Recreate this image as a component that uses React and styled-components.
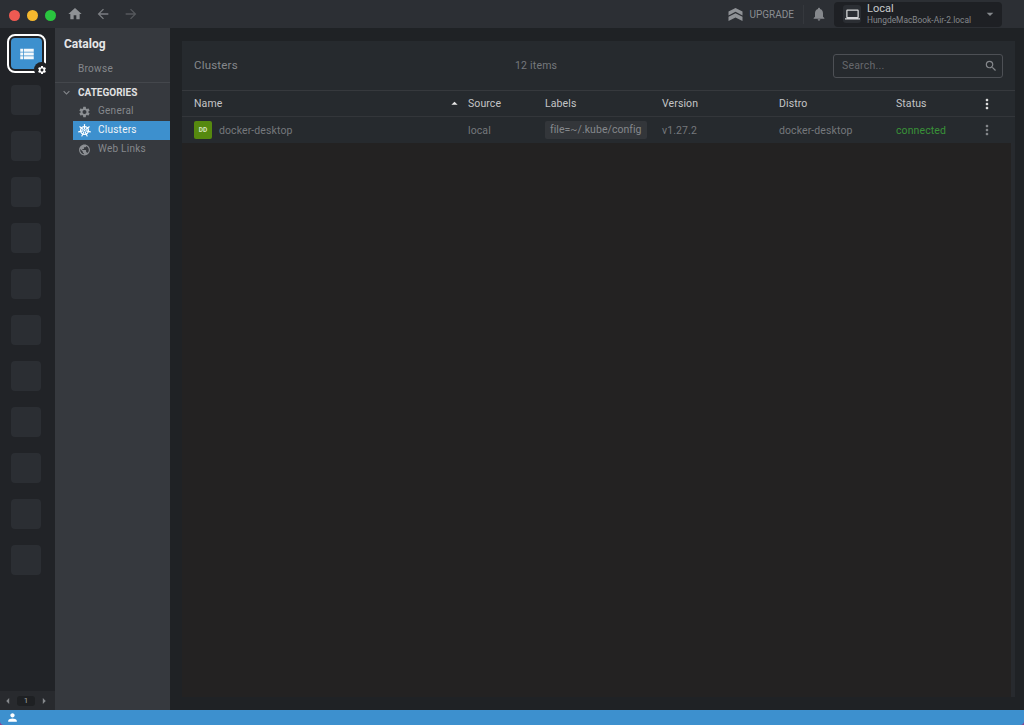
import React from "react";
import styled, { createGlobalStyle } from "styled-components";
import {
  MdHome, MdArrowBack, MdArrowForward, MdNotifications, MdLaptop, MdSearch, MdMoreVert,
  MdViewList, MdSettings, MdPublic, MdPerson, MdExpandMore, MdArrowDropDown, MdArrowDropUp,
  MdArrowLeft, MdArrowRight,
} from "react-icons/md";

const Global = createGlobalStyle`
  html, body { margin: 0; padding: 0; background: #2a2c31; }
  body { font-family: Roboto, "Liberation Sans", sans-serif; }
  * { box-sizing: border-box; }
`;

const Page = styled.div`
  width: 1024px; height: 725px; display: flex; flex-direction: column; overflow: hidden;
  background: #8d3f8e; color: #8e9297; font-size: 11px;
`;
const TopBar = styled.header`
  height: 28px; flex: none; display: flex; align-items: center; background: #2c2f34; padding-left: 9px;
`;
const Lights = styled.div`display: flex; gap: 7px; margin: 2px 11px 0 0;`;
const Light = styled.span`
  width: 11px; height: 11px; border-radius: 50%; background: ${p => p.$c};
`;
const NavIcon = styled.span`
  display: flex; color: ${p => p.$c}; font-size: ${p => p.$s || 16}px; margin-right: ${p => p.$mr || 0}px;
`;
const Spacer = styled.div`flex: 1;`;
const Upgrade = styled.div`
  display: flex; align-items: center; gap: 6px; color: #8a8d91; font-size: 10px; letter-spacing: 0;
`;
const Divider = styled.span`width: 1px; height: 19px; background: #35383d; margin: 0 7px 0 9px;`;
const Cluster = styled.div`
  width: 168px; height: 25px; margin: 0 22px 0 7px; background: #1e2024; border-radius: 4px;
  display: flex; align-items: center; padding: 0 4px 0 9px;
`;
const LaptopBox = styled.span`
  width: 18px; height: 18px; border-radius: 3px; background: #2b2e33; color: #d5d6d8;
  display: flex; align-items: center; justify-content: center; font-size: 15px; margin-right: 6px; flex: none;
`;
const ClusterText = styled.div`flex: 1; display: flex; flex-direction: column; min-width: 0;`;
const ClusterName = styled.span`font-size: 11px; line-height: 12px; color: #c8c9cb;`;
const ClusterHost = styled.span`font-size: 8.4px; line-height: 11px; color: #85888c; white-space: nowrap;`;
const Body = styled.div`flex: 1; display: flex; min-height: 0;`;
const Hotbar = styled.nav`
  width: 55px; flex: none; background: #212327; display: flex; flex-direction: column;
`;
const Tiles = styled.div`
  flex: 1; display: flex; flex-direction: column; align-items: flex-start; gap: 16px; padding: 6px 0 0 7px;
`;
const ActiveSlot = styled.div`
  width: 39px; height: 39px; margin-bottom: -4px; border: 2px solid #fff; border-radius: 8px;
  display: flex; align-items: center; justify-content: center; position: relative;
`;
const ActiveTile = styled.div`
  width: 31px; height: 31px; border-radius: 4px; background: #3d90ce; color: #f4f8fb;
  display: flex; align-items: center; justify-content: center; font-size: 18px;
`;
const GearBadge = styled.span`
  position: absolute; right: -5px; bottom: -6px; width: 15px; height: 15px; border-radius: 50%;
  background: #212327; color: #fff; display: flex; align-items: center; justify-content: center; font-size: 10px;
`;
const Tile = styled.div`width: 30px; height: 30px; margin-left: 4px; border-radius: 4px; background: #2b2e33;`;
const Pager = styled.div`
  height: 19px; flex: none; background: #282a2e; display: flex; align-items: center; justify-content: center;
  color: #85888c; font-size: 14px; padding-right: 3px;
`;
const PageNum = styled.span`
  width: 18px; height: 10px; margin: 0 2px; background: #1e2023; border-radius: 3px; font-size: 8px;
  color: #a0a2a5; display: flex; align-items: center; justify-content: center;
`;
const Sidebar = styled.aside`
  width: 115px; flex: none; background: #36393e; display: flex; flex-direction: column;
`;
const SideTitle = styled.div`
  font-size: 12px; font-weight: 700; color: #e6e7e8; padding: 9px 0 0 9px; line-height: 14px;
`;
const BrowseRow = styled.div`
  padding: 12px 0 7px 23px; font-size: 10px; line-height: 12px; color: #85888c;
  border-bottom: 1px solid #44474c; letter-spacing: .3px;
`;
const CategoryHead = styled.div`
  display: flex; align-items: center; height: 19px; padding-left: 5px; gap: 5px; color: #e0e1e2;
  font-size: 10px; font-weight: 700;
`;
const Chevron = styled.span`display: flex; color: #85888c; font-size: 13px;`;
const CatList = styled.div`display: flex; flex-direction: column; margin-left: 18px;`;
const CatRow = styled.div`
  height: 19px; display: flex; align-items: center; gap: 7px; padding: 0 0 2px 5px;
  font-size: 10px; letter-spacing: .25px;
  background: ${p => (p.$active ? "#3d90ce" : "transparent")};
  color: ${p => (p.$active ? "#f2f4f6" : "#85888c")};
`;
const CatIcon = styled.span`
  display: flex; width: 13px; justify-content: center; font-size: 14px; margin-top: 2px;
  color: ${p => (p.$active ? "#fff" : "#8c8f93")};
`;
const Main = styled.main`
  flex: 1; min-width: 0; background: #1f2225; display: flex; padding: 13px 9px 13px 12px;
`;
const Content = styled.section`
  flex: 1; display: flex; flex-direction: column; min-width: 0; background: #272a2e;
`;
const PanelHead = styled.div`
  height: 50px; flex: none; display: flex; align-items: center; padding: 0 12px 0 12px; background: #262a2e;
  border-bottom: 1px solid #36393d;
`;
const PanelTitle = styled.div`font-size: 11.5px; color: #85888c; letter-spacing: .2px; width: 321px; margin-bottom: 2px;`;
const Count = styled.div`font-size: 10.5px; color: #75787c; letter-spacing: .2px;`;
const SearchBox = styled.div`
  width: 170px; height: 24px; border: 1px solid #4d5055; border-radius: 3px; display: flex; align-items: center;
  justify-content: space-between; padding: 0 4px 0 8px; color: #66696d; font-size: 10.5px; letter-spacing: .2px;
`;
const SearchIcon = styled.span`display: flex; color: #85888c; font-size: 14px;`;
const Grid = styled.div`
  height: ${p => p.$h}px; flex: none; display: grid; align-items: center;
  grid-template-columns: 274px 77px 117px 117px 117px 84px 1fr; padding: ${p => p.$pt || 0}px 0 0 12px;
  background: #262a2e; border-bottom: 1px solid ${p => p.$line};
  font-size: 10.5px; color: ${p => p.$c}; letter-spacing: .1px;
`;
const NameHead = styled.div`display: flex; align-items: center; justify-content: space-between; padding-right: 6px;`;
const Sort = styled.span`display: flex; font-size: 15px; color: #e8e8e8;`;
const NameCell = styled.div`display: flex; align-items: center; gap: 7px;`;
const Avatar = styled.span`
  width: 18px; height: 18px; border-radius: 2px; background: #56890f; color: #d8e6c2;
  display: flex; align-items: center; justify-content: center; font-size: 6.5px; font-weight: 700; letter-spacing: 0;
`;
const LabelChip = styled.span`
  display: inline-block; height: 18px; line-height: 18px; padding: 0 5px; background: #33363a; border-radius: 2px;
  font-size: 10.5px; letter-spacing: .05px; color: #85888c; white-space: nowrap;
`;
const Connected = styled.span`color: #399238;`;
const More = styled.span`display: flex; margin-left: -1px; font-size: 16px; color: ${p => p.$c};`;
const TableBody = styled.div`flex: 1; margin-right: 4px; background: #232222;`;
const Status = styled.footer`
  height: 15px; flex: none; background: #3d90ce; color: #fff; display: flex; align-items: center;
  padding-left: 6px; font-size: 13px; border-radius: 0 0 4px 4px;
`;

const UpgradeIcon = () => (
  <svg width="15" height="13" viewBox="0 0 15 13" fill="#8f9296">
    <path d="M7.5 0 14.5 3.6V7.4L7.5 3.8 .5 7.4V3.6Z" />
    <path d="M7.5 5.2 14.5 8.8V13L7.5 9.4 .5 13V8.8Z" />
  </svg>
);

const HelmIcon = () => {
  const spokes = Array.from({ length: 7 }, (_, i) => {
    const a = (i * 2 * Math.PI) / 7 - Math.PI / 2;
    return {
      x1: 8 + 2 * Math.cos(a), y1: 8 + 2 * Math.sin(a),
      x2: 8 + 7.4 * Math.cos(a), y2: 8 + 7.4 * Math.sin(a),
    };
  });
  return (
    <svg width="15" height="15" viewBox="0 0 16 16" fill="none" stroke="#fff">
      <circle cx="8" cy="8" r="4.8" strokeWidth="1.7" />
      <circle cx="8" cy="8" r="1" fill="#fff" stroke="none" />
      {spokes.map((s, i) => <line key={i} {...s} strokeWidth="1.4" strokeLinecap="round" />)}
    </svg>
  );
};

export default function App() {
  const tiles = Array.from({ length: 11 });
  return (
    <Page>
      <Global />
      <TopBar>
        <Lights>
          <Light $c="#ee5a52" />
          <Light $c="#f5b82e" />
          <Light $c="#2ac53f" />
        </Lights>
        <NavIcon $c="#8e9195" $s={16} $mr={12}><MdHome /></NavIcon>
        <NavIcon $c="#7b7e82" $s={16} $mr={12}><MdArrowBack /></NavIcon>
        <NavIcon $c="#55585c" $s={16}><MdArrowForward /></NavIcon>
        <Spacer />
        <Upgrade><UpgradeIcon />UPGRADE</Upgrade>
        <Divider />
        <NavIcon $c="#85888c" $s={16}><MdNotifications /></NavIcon>
        <Cluster>
          <LaptopBox><MdLaptop /></LaptopBox>
          <ClusterText>
            <ClusterName>Local</ClusterName>
            <ClusterHost>HungdeMacBook-Air-2.local</ClusterHost>
          </ClusterText>
          <NavIcon $c="#85888c" $s={16}><MdArrowDropDown /></NavIcon>
        </Cluster>
      </TopBar>
      <Body>
        <Hotbar>
          <Tiles>
            <ActiveSlot>
              <ActiveTile><MdViewList /></ActiveTile>
              <GearBadge><MdSettings /></GearBadge>
            </ActiveSlot>
            {tiles.map((_, i) => <Tile key={i} />)}
          </Tiles>
          <Pager>
            <MdArrowLeft />
            <PageNum>1</PageNum>
            <MdArrowRight />
          </Pager>
        </Hotbar>
        <Sidebar>
          <SideTitle>Catalog</SideTitle>
          <BrowseRow>Browse</BrowseRow>
          <CategoryHead><Chevron><MdExpandMore /></Chevron>CATEGORIES</CategoryHead>
          <CatList>
            <CatRow><CatIcon><MdSettings /></CatIcon>General</CatRow>
            <CatRow $active><CatIcon $active><HelmIcon /></CatIcon>Clusters</CatRow>
            <CatRow><CatIcon><MdPublic /></CatIcon>Web Links</CatRow>
          </CatList>
        </Sidebar>
        <Main>
          <Content>
            <PanelHead>
              <PanelTitle>Clusters</PanelTitle>
              <Count>12 items</Count>
              <Spacer />
              <SearchBox>Search...<SearchIcon><MdSearch /></SearchIcon></SearchBox>
            </PanelHead>
            <Grid $h={26} $line="#33363a" $c="#c4c5c7">
              <NameHead>Name<Sort><MdArrowDropUp /></Sort></NameHead>
              <span>Source</span>
              <span>Labels</span>
              <span>Version</span>
              <span>Distro</span>
              <span>Status</span>
              <More $c="#e0e0e0"><MdMoreVert /></More>
            </Grid>
            <Grid $h={26} $pt={1} $line="#262a2e" $c="#75787c">
              <NameCell><Avatar>DD</Avatar>docker-desktop</NameCell>
              <span>local</span>
              <span><LabelChip>file=~/.kube/config</LabelChip></span>
              <span>v1.27.2</span>
              <span>docker-desktop</span>
              <Connected>connected</Connected>
              <More $c="#85888c"><MdMoreVert /></More>
            </Grid>
            <TableBody />
          </Content>
        </Main>
      </Body>
      <Status><MdPerson /></Status>
    </Page>
  );
}
